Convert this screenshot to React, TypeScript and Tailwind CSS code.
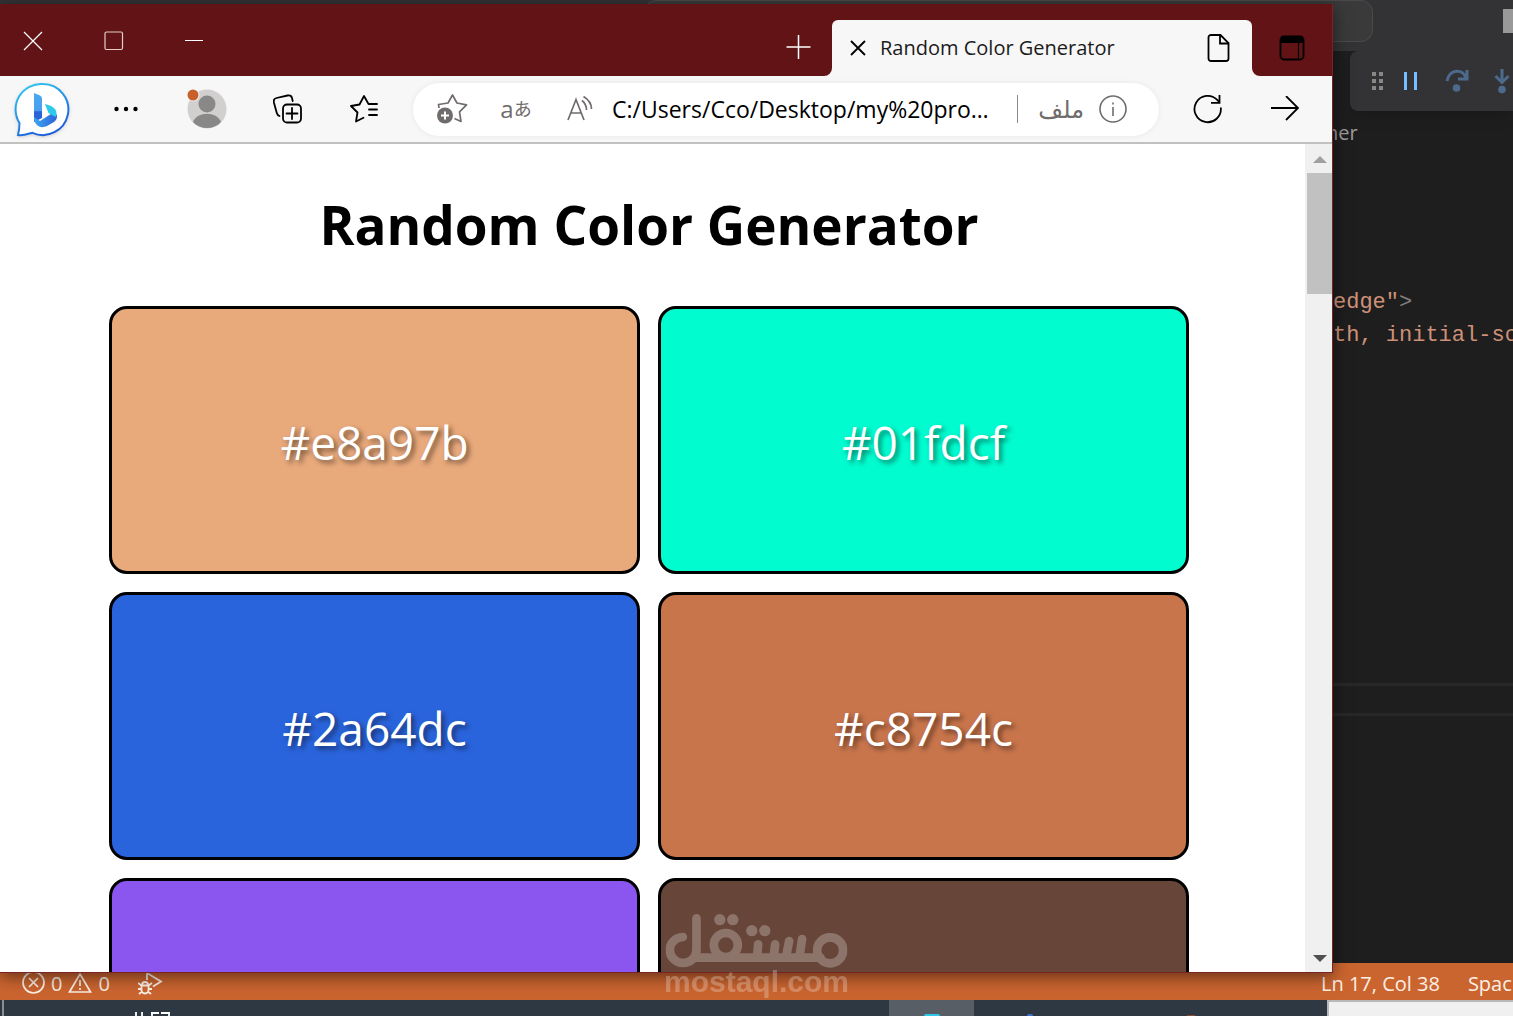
import type { ReactNode } from "react";

type Tile = { className: string; label?: string };

const tiles: Tile[] = [
  { className: "bg-[#e8a97b]", label: "#e8a97b" },
  { className: "bg-[#01fdcf]", label: "#01fdcf" },
  { className: "bg-[#2a64dc]", label: "#2a64dc" },
  { className: "bg-[#c8754c]", label: "#c8754c" },
  { className: "bg-[#8b55f0]" },
  { className: "bg-[#674539]" },
];

type IconButtonProps = { label: string; className: string; children: ReactNode };

function IconButton({ label, className, children }: IconButtonProps) {
  return (
    <button
      type="button"
      aria-label={label}
      className={`flex h-full shrink-0 items-center justify-center ${className}`}
    >
      {children}
    </button>
  );
}

function TitleBar() {
  return (
    <header className="flex h-18 shrink-0 bg-[#f7f7f7]">
      <div className="flex min-w-0 flex-1 rounded-br-lg bg-[#611316] text-white">
        <IconButton label="Close window" className="w-[66px] pt-0.5">
          <svg width="20" height="20" viewBox="0 0 20 20" stroke="currentColor" strokeWidth="1.2">
            <path d="M1 1l18 18M19 1L1 19" />
          </svg>
        </IconButton>
        <IconButton label="Maximize" className="w-24 pt-0.5">
          <svg width="20" height="20" viewBox="0 0 20 20" fill="none" stroke="#e3cfc6" strokeWidth="1.2">
            <rect x="1" y="1" width="17.5" height="17.5" rx="1.5" />
          </svg>
        </IconButton>
        <IconButton label="Minimize" className="w-16 pt-0.5">
          <svg width="18" height="2" viewBox="0 0 18 2">
            <path d="M0 .5h18" stroke="currentColor" />
          </svg>
        </IconButton>
        <div className="ml-auto pt-4">
          <IconButton label="New tab" className="w-17">
            <svg width="26" height="26" viewBox="0 0 26 26" stroke="currentColor" strokeWidth="1.5">
              <path d="M13.500 0v24M1.500 12h24" />
            </svg>
          </IconButton>
        </div>
      </div>

      <div className="w-[420px] shrink-0 bg-[#611316] pt-4">
        <div className="flex h-full items-center rounded-t-md bg-[#f7f7f7] pr-5">
          <IconButton label="Close tab" className="w-12 pl-1">
            <svg width="16" height="16" viewBox="0 0 16 16" stroke="black" strokeWidth="1.8">
              <path d="M1 1l14 14M15 1L1 15" />
            </svg>
          </IconButton>
          <span className="flex-1 text-xl whitespace-nowrap text-[#1b1b1b]">
            Random Color Generator
          </span>
          <svg width="26" height="30" viewBox="0 0 26 30" fill="none" stroke="black" strokeWidth="1.8">
            <path d="M5 2h9.500l8 8v15.500a2.500 2.500 0 0 1-2.500 2.500H5a2.500 2.500 0 0 1-2.500-2.500V4.500A2.500 2.500 0 0 1 5 2z" />
            <path d="M14 2v8.500h8.500" />
          </svg>
        </div>
      </div>

      <div className="shrink-0 rounded-bl-lg bg-[#611316] pt-4">
        <IconButton label="Tab actions menu" className="w-20">
          <svg width="26" height="26" viewBox="0 0 26 26" fill="none" stroke="black" strokeWidth="1.8">
            <rect x="1.500" y="1.500" width="23" height="23" rx="3.500" />
            <path d="M3 2h20v5H3z" fill="black" />
            <path d="M19.500 7v17" strokeWidth="1.2" />
          </svg>
        </IconButton>
      </div>
    </header>
  );
}

function BingIcon() {
  return (
    <svg width="58" height="58" viewBox="0 0 58 58" className="drop-shadow">
      <defs>
        <linearGradient id="bubble" x1="0" y1="0" x2=".5" y2="1">
          <stop offset="0" stopColor="#2fd0f0" />
          <stop offset="1" stopColor="#1d5fdc" />
        </linearGradient>
        <linearGradient id="stem" x1="0" y1="0" x2="0" y2="1">
          <stop offset="0" stopColor="#4aa8f0" />
          <stop offset=".6" stopColor="#4a9ff0" />
          <stop offset=".65" stopColor="#2b63d9" />
          <stop offset="1" stopColor="#2b63d9" />
        </linearGradient>
        <linearGradient id="bowl" x1="0" y1="0" x2="1" y2="0">
          <stop offset="0" stopColor="#3fa6f0" />
          <stop offset="1" stopColor="#2b63d9" />
        </linearGradient>
      </defs>
      <path
        d="M30 4a25.500 25.500 0 1 1-10.500 48.800C15 54 9 56 5 55c.8-3 1.500-7.500 1.500-12A25.500 25.500 0 0 1 30 4z"
        fill="white"
        stroke="url(#bubble)"
        strokeWidth="2"
      />
      <path d="M21 13l6 2.500q2 1 2 3V38l-8 4z" fill="url(#stem)" />
      <path d="M21 37c0 9 7 12 13 9l7-4c4-3 4-8 0-10L27 41z" fill="url(#bowl)" />
      <path d="M32 24l3.500 9 7 4c3-6-1-11-10.500-13z" fill="#2cc9e8" />
    </svg>
  );
}

function AddressBar() {
  return (
    <div className="mr-[9px] ml-[15px] flex h-[53px] min-w-0 flex-1 items-center rounded-full bg-white pr-8 pl-[7px] text-[#706c6c] shadow-[0_0_5px_#e6e6e6]">
      <IconButton label="Add to favorites" className="w-16">
        <svg width="32" height="32" viewBox="0 0 32 32" fill="none" stroke="currentColor" strokeWidth="1.7" strokeLinejoin="round">
          <path d="M3 15l-.5-3.500 9.500-1.500L16.500 2 21 10l9.500 1.800-7 7 1.500 9.700-6.500-3" />
          <circle cx="9" cy="22.500" r="8" fill="currentColor" stroke="none" />
          <path d="M9 18.500v8M5 22.500h8" stroke="white" strokeWidth="2" />
        </svg>
      </IconButton>
      <IconButton label="Translate" className="w-16 text-2xl leading-6">
        <span>a</span>
        <span className="text-lg leading-6">あ</span>
      </IconButton>
      <IconButton label="Read aloud" className="w-16">
        <svg width="28" height="28" viewBox="0 0 28 28" fill="none" stroke="currentColor" strokeWidth="1.7">
          <path d="M2 25L10 4.500 18 25M5 18h10M16 5.500c3 2.500 4.500 5 4.500 9.500M17.500 1.500c5 3 8 7 8 12.500" />
        </svg>
      </IconButton>
      <input
        type="text"
        aria-label="Address"
        defaultValue="C:/Users/Cco/Desktop/my%20pro…"
        className="min-w-0 flex-1 bg-transparent text-[23px] text-black outline-none"
      />
      <span className="h-7 w-px bg-[#8a8a8a]" />
      <span dir="rtl" className="mr-[15px] ml-5 text-2xl">
        ملف
      </span>
      <svg width="28" height="28" viewBox="0 0 28 28" fill="none" stroke="currentColor" strokeWidth="1.6">
        <circle cx="14" cy="14" r="13" />
        <path d="M14 12v9M14 7.500v2" />
      </svg>
    </div>
  );
}

function Toolbar() {
  return (
    <div className="flex h-17 shrink-0 items-center border-b-2 border-[#c1c1c1] bg-[#f7f7f7]">
      <IconButton label="Bing" className="w-21">
        <BingIcon />
      </IconButton>
      <IconButton label="Settings and more" className="w-21">
        <svg width="24" height="6" viewBox="0 0 24 6">
          <circle cx="2.500" cy="3" r="2.200" />
          <circle cx="12" cy="3" r="2.200" />
          <circle cx="21.500" cy="3" r="2.200" />
        </svg>
      </IconButton>
      <IconButton label="Profile" className="w-[78px]">
        <svg width="40" height="40" viewBox="0 0 40 40">
          <circle cx="20" cy="20" r="19.500" fill="#d2cfcf" />
          <circle cx="20" cy="15" r="8.500" fill="#888" />
          <path d="M6 33c4-11 24-11 28 0-7 8-21 8-28 0z" fill="#888" />
          <circle cx="6" cy="6" r="6.500" fill="#f7f7f7" />
          <circle cx="6" cy="6" r="5.500" fill="#c8602c" />
        </svg>
      </IconButton>
      <IconButton label="Collections" className="w-21">
        <svg width="30" height="30" viewBox="0 0 30 30" fill="none" stroke="black" strokeWidth="1.8" strokeLinecap="round">
          <rect x="10" y="10.500" width="18" height="18" rx="4" />
          <path d="M19 14v11M13.500 19.500h11" />
          <path d="M6.500 22c-1.500-.5-2.300-1.500-2.700-3L.9 8.500C.3 6 1.500 4.500 3.500 4l11-2.500c2.500-.5 4 .5 4.500 2.500l.7 3" />
        </svg>
      </IconButton>
      <IconButton label="Favorites" className="w-17">
        <svg width="30" height="30" viewBox="0 0 30 30" fill="none" stroke="black" strokeWidth="1.8" strokeLinecap="round" strokeLinejoin="round">
          <path d="M28 10h-8.500L15 2l-4.500 8.500L2 12l6.500 6.500L7 27.500l7.500-3.700M20 15.500h8M20 21h8" />
        </svg>
      </IconButton>
      <AddressBar />
      <IconButton label="Refresh" className="w-20">
        <svg width="30" height="30" viewBox="0 0 30 30" fill="none" stroke="black" strokeWidth="1.8">
          <path d="M27.800 13.500A13.200 13.200 0 1 1 24.500 6.200l2 2.300" />
          <path d="M26.500 1v7.800H18" />
        </svg>
      </IconButton>
      <IconButton label="Forward" className="mr-2.5 w-[74px]">
        <svg width="30" height="26" viewBox="0 0 30 26" fill="none" stroke="black" strokeWidth="1.8">
          <path d="M1 12h27M16 0l12 12-12 12" />
        </svg>
      </IconButton>
    </div>
  );
}

function Page() {
  return (
    <div className="flex min-h-0 flex-1 bg-white">
      <main className="min-w-0 flex-1 overflow-hidden pr-[116px] pl-[109px] font-['Comic_Sans_MS','Open_Sans',sans-serif]">
        <h1 className="pt-9 pb-9 text-center text-[53px] leading-[90px] font-bold whitespace-nowrap text-black">
          Random Color Generator
        </h1>
        <ul className="grid grid-cols-2 gap-[18px]">
          {tiles.map((tile, i) => (
            <li
              key={i}
              className={`flex h-[268px] items-center justify-center rounded-[18px] border-3 border-black pt-1 text-[46px] text-white text-shadow-[3px_3px_5px_rgb(0_0_0/0.5)] ${tile.className}`}
            >
              {tile.label}
            </li>
          ))}
        </ul>
      </main>
      <div className="flex w-[27px] shrink-0 flex-col items-center bg-[#f0f0f0] pl-0.5">
        <svg width="14" height="29" viewBox="0 0 14 29">
          <path d="M0 19h14l-7-7z" fill="#a0a0a0" />
        </svg>
        <div className="h-[121px] w-full bg-[#c1c1c1]" />
        <svg width="14" height="26" viewBox="0 0 14 26" className="mt-auto">
          <path d="M0 9h14l-7 7z" fill="#505050" />
        </svg>
      </div>
    </div>
  );
}

function Editor() {
  return (
    <div className="flex min-h-0 flex-1 flex-col bg-[#1e1e1e]">
      <div className="flex h-[51px] shrink-0 bg-[#333335] pl-[644px]">
        <div className="h-[42px] flex-1 rounded-xl border border-[#4a4a4c] bg-[#3a3a3b]" />
        <div className="flex w-[140px] justify-end pt-[9px]">
          <span className="h-6 w-[10px] bg-[#999]" />
        </div>
      </div>
      <div className="ml-auto flex h-15 w-[163px] shrink-0 items-center overflow-hidden rounded-l-lg bg-[#333336] pl-5 shadow-lg">
        <svg width="143" height="30" viewBox="0 0 143 30" fill="none">
          <g fill="#8a8684">
            <path d="M2 6h4v4H2zM9 6h4v4H9zM2 13h4v4H2zM9 13h4v4H9zM2 20h4v4H2zM9 20h4v4H9z" />
          </g>
          <path d="M35.500 6v18M45.500 6v18" stroke="#75beff" strokeWidth="3" />
          <g stroke="#4c6a8c" strokeWidth="3">
            <path d="M77 15c2-12 16-13 19-3M97 4v9h-9" />
            <path d="M132 3v13M125.500 10l6.500 6.500 6.500-6.500" />
          </g>
          <circle cx="86.500" cy="22" r="3.800" fill="#4c6a8c" />
          <circle cx="132" cy="23.500" r="3.800" fill="#4c6a8c" />
        </svg>
      </div>
      <div className="ml-auto w-[187px] overflow-hidden pt-2 text-xl text-[#9d9d9d]">ner</div>
      <div className="mt-[139px] ml-auto w-[180px] overflow-hidden font-['Liberation_Mono',monospace] text-[22px] leading-[33px] whitespace-pre text-[#ce9178]">
        <p>
          edge"<span className="text-[#808080]">&gt;</span>
        </p>
        <p>th, initial-sc</p>
      </div>
      <div className="mt-auto mb-[247px] h-[33px] border-y-3 border-[#282828]" />
    </div>
  );
}

function StatusBar() {
  return (
    <footer className="flex h-[37px] shrink-0 items-center overflow-hidden bg-[#cb6530] pt-1 pl-[22px] text-xl whitespace-nowrap text-[#fdf0e6]">
      <svg width="23" height="23" viewBox="0 0 23 23" fill="none" stroke="currentColor" strokeWidth="1.7">
        <circle cx="11.500" cy="10.500" r="10.500" />
        <path d="M7 6l9 9M16 6l-9 9" />
      </svg>
      <span className="ml-1.5">0</span>
      <svg width="24" height="22" viewBox="0 0 24 22" fill="none" stroke="currentColor" strokeWidth="1.7" className="ml-1.5">
        <path d="M12 1L22.500 19h-21zM12 7v6M12 15v2" />
      </svg>
      <span className="ml-1.5">0</span>
      <svg width="25" height="24" viewBox="0 0 25 24" fill="none" stroke="currentColor" strokeWidth="1.8" className="ml-7">
        <path d="M9 8V1l14 8.500-8 5" />
        <path d="M3.500 13.500h7v5a3.500 3 0 0 1-7 0zM4 13a3 3 0 0 1 6 0M0 11l3.500 2.500M14 11l-3.500 2.500M0 17h3.500M10.500 17H14M1 22l3-2.500M13 22l-3-2.500" />
      </svg>
      <div className="ml-auto flex w-[192px] gap-7">
        <span>Ln 17, Col 38</span>
        <span>Spac</span>
      </div>
    </footer>
  );
}

function Taskbar() {
  return (
    <div className="flex h-4 shrink-0 overflow-hidden bg-[#2e3842]">
      <span className="ml-0.5 w-0.5 bg-[#8a8f94]" />
      <svg width="36" height="4" viewBox="0 0 36 4" className="mt-3 ml-[131px]" stroke="white" strokeWidth="1.8">
        <path d="M1 0v4M7 0v4M16 1h8M17 1v3M26 1h9M34 1v3" />
      </svg>
      <div className="ml-auto flex w-[438px]">
        <div className="flex w-[85px] items-end justify-center bg-[#575e66]">
          <span className="h-0.5 w-4 rounded-t-full bg-[#2cc9e8]" />
        </div>
        <div className="flex flex-1 items-end gap-[154px] pl-[53px]">
          <span className="h-0.5 w-1.5 rounded-t-full bg-[#3f6fd0]" />
          <span className="h-px w-2 bg-[#8a4a30]" />
        </div>
      </div>
      <div className="w-[186px] border-t-2 border-l-2 border-[#b8b8b8] bg-[#f0f0f0]" />
    </div>
  );
}

function Watermark() {
  return (
    <div className="pointer-events-none absolute bottom-5 left-1/2 flex -translate-x-1/2 flex-col items-center text-white opacity-25">
      <svg width="182" height="54" viewBox="135 126 546 162" fill="none" stroke="currentColor" strokeWidth="26" strokeLinecap="round">
        <circle cx="629" cy="235" r="39" />
        <path d="M228 139v96a40 39 0 1 1-41-40" />
        <path d="M220 257h380" />
        <circle cx="316" cy="219" r="36" />
        <path d="M413 217l-3 36M464 217l-4 36M506 207l-9 46M545 201l-8 52" />
        <g fill="currentColor" stroke="none">
          <circle cx="298" cy="143" r="17" />
          <circle cx="337" cy="143" r="17" />
          <circle cx="394" cy="176" r="17" />
          <circle cx="433" cy="176" r="17" />
        </g>
      </svg>
      <span className="font-['Liberation_Sans',sans-serif] text-[30px] leading-7 font-bold">
        mostaql.com
      </span>
    </div>
  );
}

export default function App() {
  return (
    <div className="relative flex h-screen flex-col overflow-hidden font-['Open_Sans','DejaVu_Sans','Noto_Sans_CJK_JP',sans-serif]">
      <Editor />
      <StatusBar />
      <Taskbar />
      <div className="absolute top-1 right-[180px] bottom-[43px] left-0 flex flex-col border-r border-b border-[#7a2226] shadow-[0_4px_16px_rgb(0_0_0/0.5)]">
        <TitleBar />
        <Toolbar />
        <Page />
      </div>
      <Watermark />
    </div>
  );
}
